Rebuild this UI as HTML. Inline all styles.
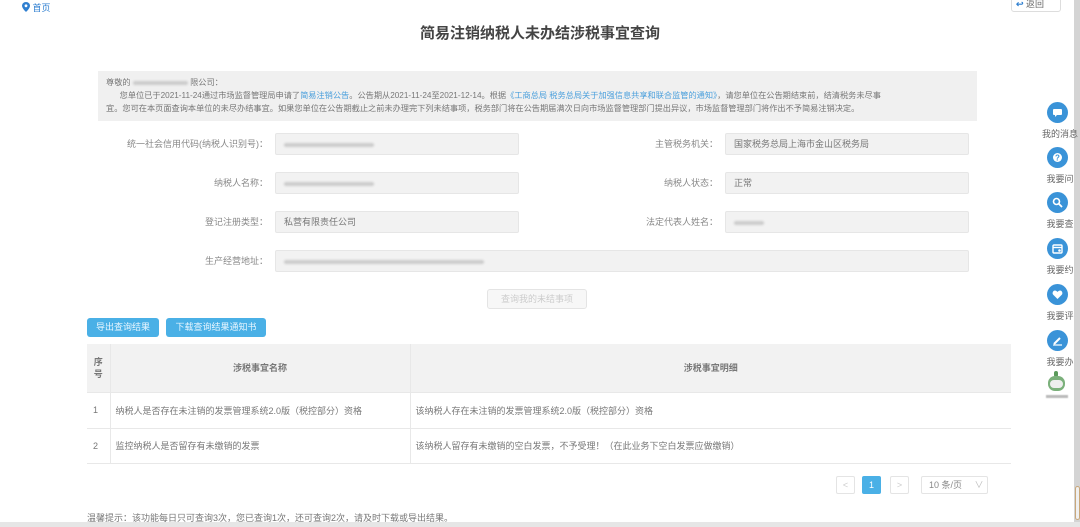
<!DOCTYPE html>
<html><head><meta charset="utf-8"><style>
*{margin:0;padding:0;box-sizing:border-box}
body{width:1080px;height:527px;overflow:hidden;background:#fff;font-family:"Liberation Sans","Noto Sans CJK SC",sans-serif;color:#555;position:relative;font-size:9px}
.a{position:absolute}
.inp{position:absolute;height:22px;background:#f2f2f2;border:1px solid #e6e6e6;border-radius:2px;font-size:9px;line-height:20px;padding-left:8px;color:#777}
.lbl{position:absolute;font-size:9px;color:#888;text-align:right;line-height:22px}
.blur{display:inline-block;height:4px;background:#ccc;border-radius:2px;vertical-align:middle;filter:blur(1px)}
.btn{position:absolute;height:19px;background:#4ab0e6;color:#e8f6ff;font-size:9px;line-height:19px;text-align:center;border-radius:3px}
.ic{position:absolute;left:1047px;width:21px;height:21px;border-radius:50%;background:#3a93d8}
.ic svg{position:absolute;left:5px;top:5px}
.il{position:absolute;left:1040px;width:40px;text-align:center;font-size:9px;color:#666}
td{border-bottom:1px solid #e8e8e8;font-size:9px;color:#777}
</style></head><body>
<div class="a" style="left:22px;top:1px;color:#2f7fd0;font-size:9px"><svg width="8" height="10" viewBox="0 0 8 10" style="vertical-align:-1px"><path d="M4 0C1.8 0 0 1.7 0 3.8 0 6.5 4 10 4 10S8 6.5 8 3.8C8 1.7 6.2 0 4 0z" fill="#2f7fd0"/><circle cx="4" cy="3.8" r="1.4" fill="#fff"/></svg> 首页</div>
<div class="a" style="left:1011px;top:-3px;width:50px;height:15px;border:1px solid #ddd;border-radius:3px;font-size:9px;color:#666;padding-left:4px;line-height:13px"><span style="color:#2f7fd0;font-weight:bold">↩</span> 返回</div>
<div class="a" style="left:0;width:1080px;top:22px;text-align:center;font-size:15px;font-weight:bold;color:#444">简易注销纳税人未办结涉税事宜查询</div>
<div class="a" style="left:98px;top:71px;width:879px;height:50px;background:#f0f0f0;padding:5px 8px;font-size:8.2px;line-height:13px;color:#777;white-space:nowrap;overflow:hidden">
尊敬的 <span class="blur" style="width:55px"></span> 限公司：<br>
&nbsp;&nbsp;&nbsp;&nbsp;&nbsp;&nbsp;您单位已于2021-11-24通过市场监督管理局申请了<span style="color:#4a9fdc">简易注销公告</span>。公告期从2021-11-24至2021-12-14。根据<span style="color:#4a9fdc">《工商总局 税务总局关于加强信息共享和联合监管的通知》</span>，请您单位在公告期结束前，结清税务未尽事<br>宜。您可在本页面查询本单位的未尽办结事宜。如果您单位在公告期截止之前未办理完下列未结事项，税务部门将在公告期届满次日向市场监督管理部门提出异议，市场监督管理部门将作出不予简易注销决定。
</div>
<div class="lbl" style="left:100px;width:168px;top:133px">统一社会信用代码(纳税人识别号)：</div>
<div class="inp" style="left:275px;top:133px;width:244px"><span class="blur" style="width:90px"></span></div>
<div class="lbl" style="left:560px;width:158px;top:133px">主管税务机关：</div>
<div class="inp" style="left:725px;top:133px;width:244px">国家税务总局上海市金山区税务局</div>
<div class="lbl" style="left:100px;width:168px;top:172px">纳税人名称：</div>
<div class="inp" style="left:275px;top:172px;width:244px"><span class="blur" style="width:90px"></span></div>
<div class="lbl" style="left:560px;width:158px;top:172px">纳税人状态：</div>
<div class="inp" style="left:725px;top:172px;width:244px">正常</div>
<div class="lbl" style="left:100px;width:168px;top:211px">登记注册类型：</div>
<div class="inp" style="left:275px;top:211px;width:244px">私营有限责任公司</div>
<div class="lbl" style="left:560px;width:158px;top:211px">法定代表人姓名：</div>
<div class="inp" style="left:725px;top:211px;width:244px"><span class="blur" style="width:30px"></span></div>
<div class="lbl" style="left:100px;width:168px;top:250px">生产经营地址：</div>
<div class="inp" style="left:275px;top:250px;width:694px"><span class="blur" style="width:200px"></span></div>
<div class="a" style="left:487px;top:289px;width:100px;height:20px;border:1px solid #e4e4e4;border-radius:3px;background:#f7f7f7;color:#ccc;text-align:center;line-height:18px;font-size:9px">查询我的未结事项</div>
<div class="btn" style="left:87px;top:318px;width:72px">导出查询结果</div>
<div class="btn" style="left:166px;top:318px;width:100px">下载查询结果通知书</div>
<table class="a" style="left:87px;top:344px;width:924px;border-collapse:collapse">
<tr style="background:#f2f2f2;height:48px"><td style="width:23px;text-align:center;font-weight:bold;color:#777;line-height:12px;border-right:1px solid #e8e8e8">序<br>号</td><td style="width:300px;text-align:center;font-weight:bold;color:#777;border-right:1px solid #e8e8e8">涉税事宜名称</td><td style="text-align:center;font-weight:bold;color:#777">涉税事宜明细</td></tr>
<tr style="height:36px"><td style="padding-left:6px;border-right:1px solid #e8e8e8">1</td><td style="padding-left:5px;border-right:1px solid #e8e8e8">纳税人是否存在未注销的发票管理系统2.0版（税控部分）资格</td><td style="padding-left:5px">该纳税人存在未注销的发票管理系统2.0版（税控部分）资格</td></tr>
<tr style="height:35px"><td style="padding-left:6px;border-right:1px solid #e8e8e8">2</td><td style="padding-left:5px;border-right:1px solid #e8e8e8">监控纳税人是否留存有未缴销的发票</td><td style="padding-left:5px">该纳税人留存有未缴销的空白发票，不予受理！（在此业务下空白发票应做缴销）</td></tr>
</table>
<div class="a" style="left:836px;top:476px;width:19px;height:18px;border:1px solid #e4e4e4;border-radius:2px;color:#ccc;text-align:center;line-height:16px">&lt;</div>
<div class="a" style="left:862px;top:476px;width:19px;height:18px;background:#4ab0e6;border-radius:2px;color:#fff;text-align:center;line-height:18px">1</div>
<div class="a" style="left:890px;top:476px;width:19px;height:18px;border:1px solid #e4e4e4;border-radius:2px;color:#ccc;text-align:center;line-height:16px">&gt;</div>
<div class="a" style="left:921px;top:476px;width:67px;height:18px;border:1px solid #e4e4e4;border-radius:2px;color:#888;line-height:16px;padding-left:7px">10 条/页 <span style="color:#bbb;margin-left:10px">∨</span></div>
<div class="a" style="left:87px;top:511px;font-size:9px;color:#777">温馨提示：该功能每日只可查询3次，您已查询1次，还可查询2次，请及时下载或导出结果。</div>
<div class="a" style="left:0;top:522px;width:1080px;height:5px;background:#e6e6e6"></div>
<div class="a" style="left:1074px;top:0;width:6px;height:522px;background:#d4d4d4"></div>
<div class="a" style="left:1075px;top:486px;width:5px;height:34px;background:#f0f0f0;border:1px solid #c9a77a;border-radius:3px"></div>
<div class="ic" style="top:102px"><svg width="11" height="11" viewBox="0 0 11 11"><rect x="1" y="2" width="9" height="6" rx="1" fill="#fff"/><path d="M3 8L3 10 5 8z" fill="#fff"/></svg></div><div class="il" style="top:127px">我的消息</div>
<div class="ic" style="top:147px"><svg width="11" height="11" viewBox="0 0 11 11"><circle cx="5.5" cy="5.5" r="4.5" fill="#fff"/><text x="5.5" y="8.3" font-size="8" text-anchor="middle" fill="#3a93d8" font-weight="bold">?</text></svg></div><div class="il" style="top:172px">我要问</div>
<div class="ic" style="top:192px"><svg width="11" height="11" viewBox="0 0 11 11"><circle cx="4.5" cy="4.5" r="3" fill="none" stroke="#fff" stroke-width="1.6"/><path d="M6.8 6.8L10 10" stroke="#fff" stroke-width="1.8"/></svg></div><div class="il" style="top:217px">我要查</div>
<div class="ic" style="top:238px"><svg width="11" height="11" viewBox="0 0 11 11"><rect x="1" y="2" width="9" height="8" rx="1" fill="none" stroke="#fff" stroke-width="1.4"/><path d="M1 4.5h9" stroke="#fff" stroke-width="1.4"/><circle cx="7.5" cy="7.5" r="1.3" fill="#fff"/></svg></div><div class="il" style="top:263px">我要约</div>
<div class="ic" style="top:284px"><svg width="11" height="11" viewBox="0 0 11 11"><path d="M5.5 10L1 5.5C0 4 1 1.5 3 1.5 4.3 1.5 5.5 3 5.5 3S6.7 1.5 8 1.5C10 1.5 11 4 10 5.5z" fill="#fff"/></svg></div><div class="il" style="top:309px">我要评</div>
<div class="ic" style="top:330px"><svg width="11" height="11" viewBox="0 0 11 11"><path d="M2 9L8 3" stroke="#fff" stroke-width="2"/><path d="M1 10h9" stroke="#fff" stroke-width="1.2"/></svg></div><div class="il" style="top:355px">我要办</div>
<div class="a" style="left:1054px;top:371px;width:4px;height:6px;border-radius:2px;background:#5a9a5a"></div>
<div class="a" style="left:1048px;top:376px;width:17px;height:15px;border-radius:7px;background:#7bb07b"></div>
<div class="a" style="left:1050px;top:380px;width:13px;height:8px;border-radius:4px;background:#eee"></div>
<div class="a" style="left:1046px;top:395px;width:22px;height:3px;background:#bbb;filter:blur(.5px)"></div>
</body></html>
